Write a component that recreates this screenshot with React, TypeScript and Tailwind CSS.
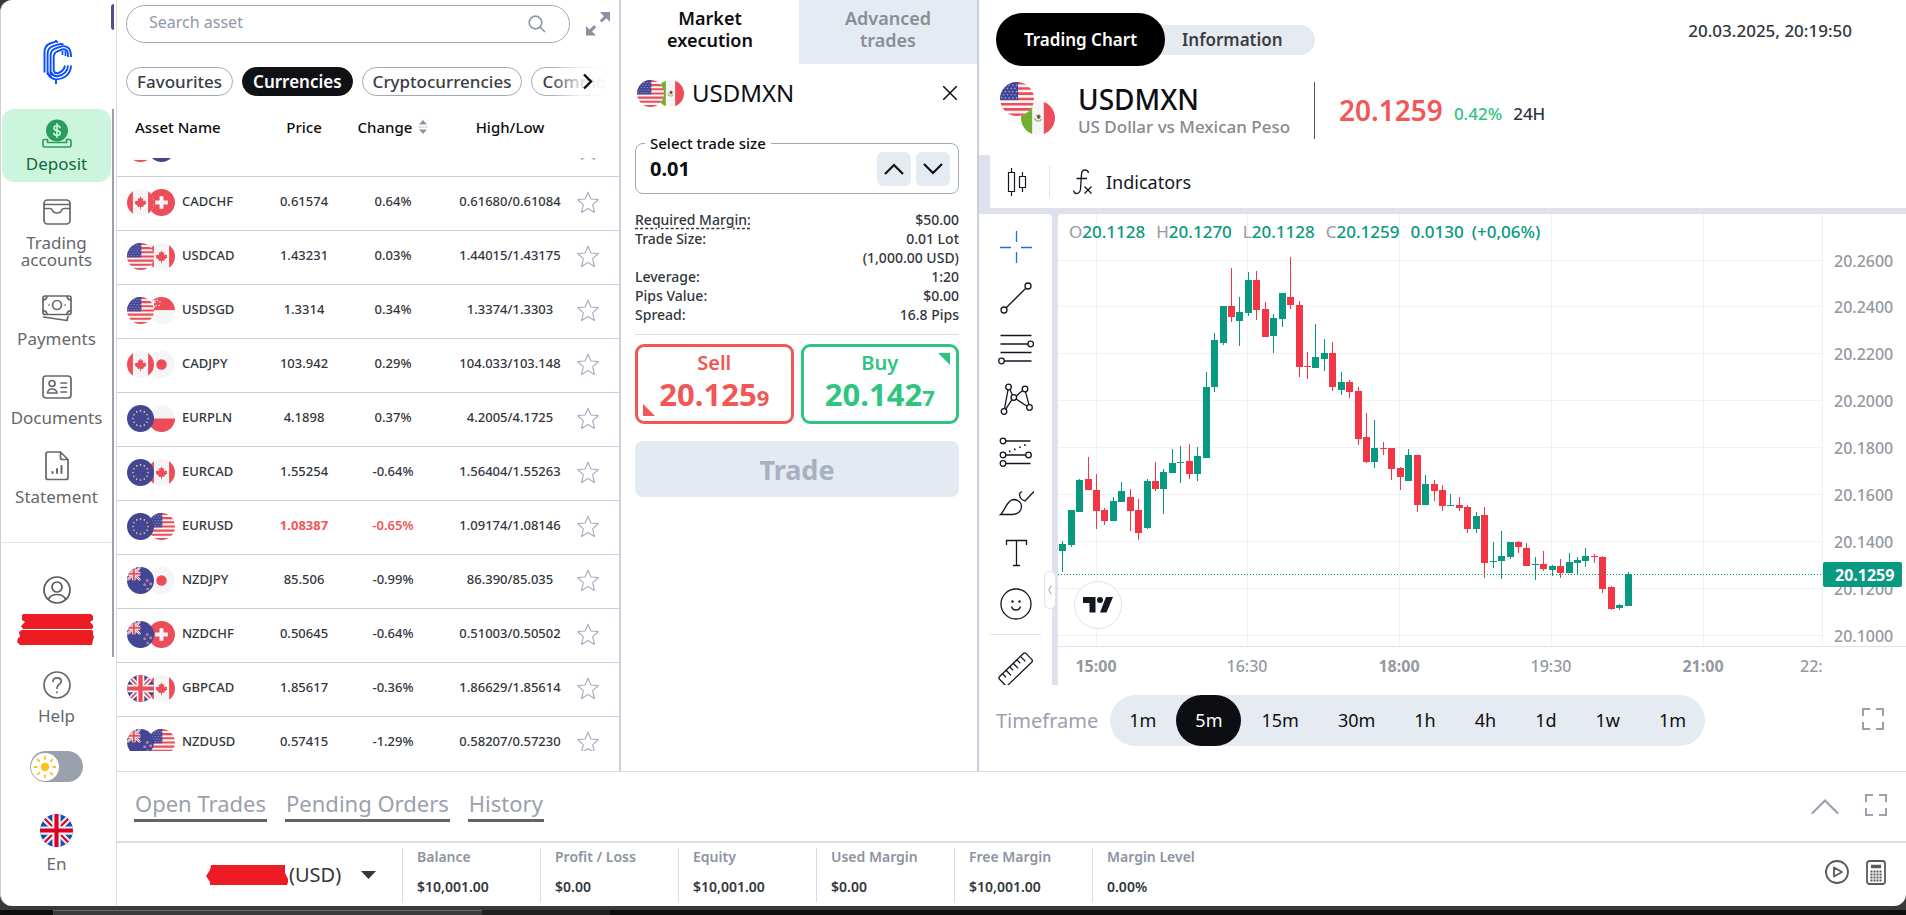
import { useState } from "react";
import type { ReactNode } from "react";
import clsx from "clsx";

type FlagCode = "us" | "ca" | "ch" | "sg" | "jp" | "eu" | "pl" | "nz" | "gb" | "mx" | "au";

type Asset = {
  name: string;
  flags: [FlagCode, FlagCode];
  price: string;
  change: string;
  range: string;
  falling?: boolean;
};

const assets: Asset[] = [
  { name: "CADCHF", flags: ["ca", "ch"], price: "0.61574", change: "0.64%", range: "0.61680/0.61084" },
  { name: "USDCAD", flags: ["us", "ca"], price: "1.43231", change: "0.03%", range: "1.44015/1.43175" },
  { name: "USDSGD", flags: ["us", "sg"], price: "1.3314", change: "0.34%", range: "1.3374/1.3303" },
  { name: "CADJPY", flags: ["ca", "jp"], price: "103.942", change: "0.29%", range: "104.033/103.148" },
  { name: "EURPLN", flags: ["eu", "pl"], price: "4.1898", change: "0.37%", range: "4.2005/4.1725" },
  { name: "EURCAD", flags: ["eu", "ca"], price: "1.55254", change: "-0.64%", range: "1.56404/1.55263" },
  { name: "EURUSD", flags: ["eu", "us"], price: "1.08387", change: "-0.65%", range: "1.09174/1.08146", falling: true },
  { name: "NZDJPY", flags: ["nz", "jp"], price: "85.506", change: "-0.99%", range: "86.390/85.035" },
  { name: "NZDCHF", flags: ["nz", "ch"], price: "0.50645", change: "-0.64%", range: "0.51003/0.50502" },
  { name: "GBPCAD", flags: ["gb", "ca"], price: "1.85617", change: "-0.36%", range: "1.86629/1.85614" },
  { name: "NZDUSD", flags: ["nz", "us"], price: "0.57415", change: "-1.29%", range: "0.58207/0.57230" },
];

// direction, wick top, body top, body bottom, wick bottom
type Candle = ["g" | "r", number, number, number, number];

const candles: Candle[] = [
  ["g", 327, 330, 337, 358], ["g", 296, 296, 331, 333], ["g", 265, 266, 298, 298], ["r", 243, 265, 276, 276],
  ["r", 260, 276, 297, 315], ["r", 294, 296, 307, 311], ["g", 283, 287, 307, 307], ["g", 268, 277, 288, 288],
  ["r", 275, 283, 297, 317], ["r", 285, 296, 319, 326], ["g", 265, 267, 314, 315], ["r", 248, 267, 275, 277],
  ["g", 255, 258, 275, 300], ["g", 235, 249, 259, 259], ["g", 232, 248, 249, 269], ["r", 230, 247, 260, 265],
  ["g", 233, 242, 260, 267], ["g", 158, 173, 244, 244], ["g", 119, 126, 173, 178], ["g", 92, 92, 129, 131],
  ["r", 54, 92, 103, 108], ["g", 83, 98, 107, 132], ["g", 58, 66, 99, 102], ["r", 57, 66, 96, 106],
  ["r", 88, 95, 123, 123], ["g", 100, 104, 122, 139], ["g", 79, 79, 105, 113], ["r", 43, 83, 91, 95],
  ["r", 87, 91, 153, 163], ["r", 138, 152, 153, 165], ["g", 110, 143, 154, 154], ["g", 125, 139, 145, 157],
  ["r", 128, 139, 173, 177], ["g", 158, 168, 176, 181], ["r", 166, 168, 178, 184], ["r", 173, 177, 225, 231],
  ["r", 199, 223, 248, 249], ["g", 206, 234, 248, 254], ["r", 228, 234, 235, 241], ["r", 234, 234, 255, 266],
  ["r", 253, 254, 263, 276], ["g", 235, 241, 267, 267], ["r", 241, 241, 291, 298], ["g", 261, 270, 291, 291],
  ["r", 266, 270, 277, 287], ["r", 271, 276, 292, 297], ["g", 280, 291, 292, 292], ["r", 283, 291, 294, 297],
  ["r", 291, 293, 315, 319], ["g", 298, 302, 315, 319], ["r", 293, 301, 349, 364], ["g", 328, 347, 348, 354],
  ["g", 317, 342, 347, 365], ["g", 328, 328, 343, 345], ["r", 327, 328, 333, 339], ["r", 329, 334, 352, 352],
  ["g", 343, 350, 351, 366], ["r", 337, 350, 355, 357], ["g", 351, 352, 356, 362], ["r", 345, 352, 359, 364],
  ["g", 339, 348, 359, 359], ["g", 343, 346, 349, 361], ["g", 334, 342, 347, 353], ["r", 340, 342, 343, 349],
  ["r", 342, 343, 375, 379], ["r", 372, 373, 395, 396], ["g", 390, 391, 394, 396], ["g", 358, 360, 392, 392],
];

const priceTicks = ["20.2600", "20.2400", "20.2200", "20.2000", "20.1800", "20.1600", "20.1400", "20.1200", "20.1000"];
const timeTicks = ["15:00", "16:30", "18:00", "19:30", "21:00"];
const timeframes = ["1m", "5m", "15m", "30m", "1h", "4h", "1d", "1w", "1m"];

const tradeInfo = [
  ["Required Margin:", "$50.00"],
  ["Trade Size:", "0.01 Lot"],
  ["", "(1,000.00 USD)"],
  ["Leverage:", "1:20"],
  ["Pips Value:", "$0.00"],
  ["Spread:", "16.8 Pips"],
];

const accountStats = [
  ["Balance", "$10,001.00"],
  ["Profit / Loss", "$0.00"],
  ["Equity", "$10,001.00"],
  ["Used Margin", "$0.00"],
  ["Free Margin", "$10,001.00"],
  ["Margin Level", "0.00%"],
];

const RED = "#ec4d58";
const BLUE = "#434695";
const PALE = "#f5f5f5";

function UnionJack() {
  return (
    <>
      <rect width="32" height="32" fill={BLUE} />
      <path d="M0 0 32 32M32 0 0 32" stroke={PALE} strokeWidth="6" />
      <path d="M0 0 32 32M32 0 0 32" stroke={RED} strokeWidth="2" />
      <path d="M16 0V32M0 16H32" stroke={PALE} strokeWidth="9" />
      <path d="M16 0V32M0 16H32" stroke={RED} strokeWidth="5" />
    </>
  );
}

function flagArt(code: FlagCode): ReactNode {
  switch (code) {
    case "us":
      return (
        <>
          <rect width="32" height="32" fill={PALE} />
          <path
            d="M0 1.2H32M0 6.1H32M0 11H32M0 16H32M0 20.9H32M0 25.8H32M0 30.8H32"
            stroke={RED}
            strokeWidth="2.5"
          />
          <rect width="17" height="17" fill={BLUE} />
          <path
            d="M1 3H17M3 6H17M1 9H17M3 12H17M1 15H17"
            stroke="#b9bbe0"
            strokeWidth="1.1"
            strokeDasharray="1.1 2.4"
          />
        </>
      );
    case "ca":
      return (
        <>
          <rect width="32" height="32" fill={PALE} />
          <path d="M0 0H7V32H0ZM25 0H32V32H25Z" fill={RED} />
          <path
            d="M16 9l1.6 2.6 1.7-.7-.6 3.5 1.9-1.2.4 1.2 2-.2-.8 2.2.9.6-4 3 .4 1.3-3-.4V24h-1v-3.1l-3 .4.4-1.3-4-3 .9-.6-.8-2.2 2 .2.4-1.2 1.9 1.2-.6-3.5 1.7.7Z"
            fill={RED}
          />
        </>
      );
    case "ch":
      return (
        <>
          <rect width="32" height="32" fill={RED} />
          <path d="M16 8.5V23.5M8.5 16H23.5" stroke={PALE} strokeWidth="4.6" />
        </>
      );
    case "sg":
      return (
        <>
          <rect width="32" height="32" fill={PALE} />
          <rect width="32" height="15.5" fill={RED} />
          <path d="M9 4a4.6 4.6 0 1 0 0 8.5 5.6 5.6 0 0 1 0-8.5Z" fill={PALE} />
          {[[11, 4], [14, 6], [13, 10], [9.5, 10], [8.5, 6.5]].map(([x, y]) => (
            <circle key={`${x}-${y}`} cx={x} cy={y} r="0.9" fill={PALE} />
          ))}
        </>
      );
    case "jp":
      return (
        <>
          <rect width="32" height="32" fill={PALE} />
          <circle cx="16" cy="16" r="6.2" fill={RED} />
        </>
      );
    case "eu":
      return (
        <>
          <rect width="32" height="32" fill={BLUE} />
          {Array.from({ length: 12 }, (_, i) => (
            <circle
              key={i}
              cx={16 + 9 * Math.cos((i * Math.PI) / 6)}
              cy={16 + 9 * Math.sin((i * Math.PI) / 6)}
              r="0.95"
              fill="#ffe15a"
            />
          ))}
        </>
      );
    case "pl":
      return (
        <>
          <rect width="32" height="32" fill={PALE} />
          <rect y="16" width="32" height="16" fill={RED} />
        </>
      );
    case "mx":
      return (
        <>
          <rect width="32" height="32" fill={PALE} />
          <rect width="10.5" height="32" fill="#73af2d" />
          <rect x="21.5" width="10.5" height="32" fill={RED} />
          <path d="M13 16a3.3 3.3 0 0 0 6.300 1" stroke="#8bb86a" strokeWidth="1.2" fill="none" />
          <path d="M14.5 14.5l2-2 2 1.5-.5 2.5-2 .5Z" fill="#7c5546" />
          <path d="M14 13.5l1-.5" stroke="#e0b04a" />
        </>
      );
    case "gb":
      return <UnionJack />;
    default:
      return (
        <>
          <rect width="32" height="32" fill={BLUE} />
          <svg width="16" height="16" viewBox="0 0 32 32">
            <UnionJack />
          </svg>
          {[[24, 16], [21, 21], [28, 20], [24.5, 26]].map(([x, y]) => (
            <g key={x}>
              <circle cx={x} cy={y} r="1.5" fill="#b9bbe0" />
              <circle cx={x} cy={y} r="1" fill={RED} />
            </g>
          ))}
        </>
      );
  }
}

function Flag({ code, className }: { code: FlagCode; className?: string }) {
  return (
    <span className={clsx("block shrink-0 overflow-hidden rounded-full", className)}>
      <svg viewBox="0 0 32 32" className="size-full" aria-hidden="true">
        {flagArt(code)}
      </svg>
    </span>
  );
}

function FlagPair({ flags }: { flags: [FlagCode, FlagCode] }) {
  return (
    <span className="flex shrink-0">
      <Flag code={flags[0]} className="relative z-10 size-[27px]" />
      <Flag code={flags[1]} className="-ml-[6px] size-[27px]" />
    </span>
  );
}

function Logo() {
  return (
    <svg width="30" height="44" viewBox="0 0 30 44" fill="none" stroke="#0a4dff" strokeWidth="1.9" aria-hidden="true">
      <path d="M1.5 32.5V12.5Q1.5 5.5 7 3.5L12 1.8Q13.5 1.4 15 2.2" />
      <path d="M4.6 35V14Q4.6 8 10 6.2L15.5 4.3Q18 3.6 20.5 4.4" />
      <path d="M7.6 37V15.5Q7.6 10.5 12 8.7L17 6.8Q22 5 25.5 8Q28 10.5 28 17" />
      <path d="M10.7 31V17.5Q10.7 13 14 11.5L19 9.5Q22.5 8.6 24.2 11Q25 12.5 25 17" />
      <path d="M19.5 11V15M22.5 10.5V16" strokeWidth="1.7" />
      <path d="M5 32.5Q6 38 12 39.2Q17 40 22.5 36.5Q28 32 28 25.5" />
      <path d="M8 32Q10 36.5 14.5 36.3Q24.5 34 25 25.5" />
      <path d="M10.7 31Q12 33.7 15 33.2Q21 31 22 25.5" />
      <path d="M13 0V2M13 39V44" />
    </svg>
  );
}

function IconBox({ children }: { children: ReactNode }) {
  return (
    <svg
      width="30"
      height="30"
      viewBox="0 0 30 30"
      fill="none"
      stroke="currentColor"
      strokeWidth="1.7"
      strokeLinecap="round"
      strokeLinejoin="round"
      aria-hidden="true"
    >
      {children}
    </svg>
  );
}

function NavItem({ label, icon, active }: { label: string; icon: ReactNode; active?: boolean }) {
  return (
    <a
      href="#"
      className={clsx(
        "flex w-[109px] flex-col items-center gap-[7px] rounded-[12px] pt-[9px] pb-[10px] text-center text-[17px] leading-[17px]",
        active ? "bg-[#ccf5de] text-[#0f6b3b]" : "text-[#66676d]",
      )}
    >
      {icon}
      <span className="max-w-[92px]">{label}</span>
    </a>
  );
}

function Sidebar() {
  return (
    <aside className="relative flex w-[116px] shrink-0 flex-col border-r border-[#dcdde1] pl-px text-[#58595e]">
      <div className="absolute top-1 right-[2px] h-[26px] w-[3px] rounded-l-full bg-[#5b4796]" />
      <div className="absolute top-[109px] right-[2px] h-[548px] w-[2px] bg-[#9ba0ae]" />
      <div className="flex h-[109px] shrink-0 justify-center pt-[40px] pr-[3px]">
        <Logo />
      </div>
      <nav className="flex flex-col gap-[6px]">
        <NavItem
          active
          label="Deposit"
          icon={
            <IconBox>
              <g stroke="#2a9d5c">
                <circle cx="15" cy="12.5" r="11" fill="#2a9d5c" stroke="none" />
                <path d="M5.5 21.5H2.5Q1 21.5 1 23V27.5Q1 29 2.5 29H27.5Q29 29 29 27.5V23Q29 21.5 27.5 21.5H24.5V24.5H5.5Z" />
                <path
                  d="M18 9.5Q17.5 7.8 15 7.8Q12 7.8 12 10Q12 12 15 12.5Q18.2 13 18.2 15.2Q18.2 17.3 15 17.3Q12.2 17.3 11.8 15.3M15 5.8V19.2"
                  stroke="#ccf5de"
                />
              </g>
            </IconBox>
          }
        />
        <NavItem
          label="Trading accounts"
          icon={
            <IconBox>
              <rect x="2" y="3" width="26" height="24" rx="3.5" />
              <path d="M2 7.5H28M2 11.5H8Q10 11.5 10.5 13.5Q11.5 16 15 16Q18.5 16 19.5 13.5Q20 11.5 22 11.5H28" />
            </IconBox>
          }
        />
        <NavItem
          label="Payments"
          icon={
            <IconBox>
              <rect x="1" y="3" width="28" height="18.5" rx="2" />
              <circle cx="15" cy="12" r="4.5" />
              <path d="M7 12h.1M23 12h.1M1.5 7Q4.5 6.5 5 3.5M28.5 7Q25.5 6.5 25 3.5M1.5 17.5Q4.5 18 5 21M28.5 17.5Q25.5 18 25 21M1.5 24L25 27.5L26 23.5" />
            </IconBox>
          }
        />
        <NavItem
          label="Documents"
          icon={
            <IconBox>
              <rect x="1" y="4" width="28" height="22" rx="3" />
              <circle cx="10" cy="11.5" r="3" />
              <path d="M5.5 21Q6 17 10 17Q14.5 17 15 21ZM19 11H24.5M19 15.5H24.5M19 20H24.5" />
            </IconBox>
          }
        />
        <NavItem
          label="Statement"
          icon={
            <IconBox>
              <path d="M18.5 1H6Q4 1 4 3V26.5Q4 28.5 6 28.5H24Q26 28.5 26 26.5V8.5L18.5 1V6.5Q18.5 8.5 20.5 8.5H26" />
              <path d="M10.5 21V22M15 18V22M19.5 15V22" strokeWidth="2" />
            </IconBox>
          }
        />
      </nav>
      <div className="mt-[27px] mr-1 h-px shrink-0 bg-[#e3e4e8]" />
      <div className="flex w-[109px] flex-col items-center pt-8">
        <IconBox>
          <circle cx="15" cy="15" r="13" />
          <circle cx="15" cy="12" r="5" />
          <path d="M6.5 24Q9 19.5 15 19.5Q21 19.5 23.5 24" />
        </IconBox>
        <svg width="80" height="33" viewBox="0 0 80 33" className="mt-2" aria-hidden="true">
          <path
            d="M6 1H74L76 3V7L73 9L76 12V15L74 16.5L76 18V22L77 24L76 27L75 32H3L0 29L1 25L3 24L2 19L6 16L4 13L8 9L5 7V2Z"
            fill="#ed1c24"
          />
          <path d="M5 16.5H74" stroke="#fff" />
        </svg>
        <div className="pt-[15px]">
          <NavItem
            label="Help"
            icon={
              <IconBox>
                <circle cx="15" cy="15" r="13" />
                <path d="M11 11.5Q11.2 7.8 15 7.8Q19.3 7.8 19.3 11.2Q19.3 13 17 14.5Q15 15.8 15 18.2M15 22.2v.2" />
              </IconBox>
            }
          />
        </div>
        <button
          type="button"
          aria-label="Light theme"
          className="mt-[17px] flex h-[31px] w-[53px] items-center rounded-full bg-[#9ba0ad] pl-px"
        >
          <span className="flex size-[28px] items-center justify-center rounded-full bg-white">
            <svg width="26" height="26" viewBox="0 0 26 26" stroke="#fcc01f" strokeWidth="1.8" aria-hidden="true">
              <circle cx="13" cy="13" r="4.2" fill="#fcc01f" stroke="none" />
              <path d="M13 2V5.5M13 20.5V24M2 13H5.5M20.5 13H24M5.2 5.2L7.7 7.7M18.3 18.3L20.8 20.8M5.2 20.8L7.7 18.3M18.3 7.7L20.8 5.2" />
            </svg>
          </span>
        </button>
        <button type="button" className="mt-8 flex flex-col items-center gap-2 text-[17px] leading-[18px] text-[#66676d]">
          <svg width="33" height="33" viewBox="0 0 32 32" className="rounded-full" aria-hidden="true">
            <rect width="32" height="32" fill="#1450b4" />
            <path d="M0 0 32 32M32 0 0 32" stroke="#f0f0f0" strokeWidth="6" />
            <path d="M0 0 32 32M32 0 0 32" stroke="#d80027" strokeWidth="2" />
            <path d="M16 0V32M0 16H32" stroke="#f0f0f0" strokeWidth="8" />
            <path d="M16 0V32M0 16H32" stroke="#d80027" strokeWidth="4" />
          </svg>
          En
        </button>
      </div>
    </aside>
  );
}

function Star() {
  return (
    <svg width="22" height="23" viewBox="0 0 22 23" fill="none" stroke="#a9b0c3" strokeWidth="1.2" strokeLinejoin="round" aria-hidden="true">
      <path d="M11 1.2L13.9 8L21.2 8.7L15.7 13.6L17.4 21.5L11 17.5L4.6 21.5L6.3 13.6L.8 8.7L8.1 8Z" />
    </svg>
  );
}

const gridCols = "grid grid-cols-[136px_102px_90px_130px_1fr] items-center";

function AssetPanel() {
  const [category, setCategory] = useState("Currencies");

  return (
    <section className="flex w-[504px] shrink-0 flex-col border-r-2 border-[#c9d0dc]">
      <div className="flex items-center gap-4 pt-[5px] pl-[9px]">
        <div className="flex h-[38px] w-[444px] items-center rounded-full border border-[#a0a9ba] pr-[23px] pl-[22px]">
          <input
            type="text"
            aria-label="Search asset"
            placeholder="Search asset"
            className="min-w-0 flex-1 pb-1 text-[16px] outline-none placeholder:text-[#9097a8]"
          />
          <svg width="18" height="18" viewBox="0 0 18 18" fill="none" stroke="#8f97ab" strokeWidth="1.7" aria-hidden="true">
            <circle cx="7.5" cy="7.5" r="6.3" />
            <path d="M12 12L17 17" />
          </svg>
        </div>
        <button type="button" aria-label="Expand list">
          <svg width="24" height="24" viewBox="0 0 24 24" fill="#8b93a2" aria-hidden="true">
            <path d="M14 0H24V10L20.3 6.3L15.8 10.6L13.8 8.6L17.9 4.3ZM0 14L3.5 17.5L8 13L10.2 15.3L6 19.6L10 23.5H0Z" />
          </svg>
        </button>
      </div>

      <div className="relative mt-6 mr-[10px] ml-[9px] overflow-hidden">
        <div className="flex gap-[9px]">
          {["Favourites", "Currencies", "Cryptocurrencies", "Commodities"].map((item) => (
            <button
              key={item}
              type="button"
              onClick={() => setCategory(item)}
              className={clsx(
                "h-[29px] shrink-0 rounded-full border px-[10px] pb-px text-[17px] leading-none",
                item === category
                  ? "border-[#101114] bg-[#101114] font-semibold text-white"
                  : "border-[#a0a9ba] font-medium text-[#3a3d45]",
              )}
            >
              {item}
            </button>
          ))}
        </div>
        <div className="absolute inset-y-0 right-0 flex w-[60px] items-center bg-linear-to-r from-transparent via-white/80 to-white pl-[33px]">
          <button type="button" aria-label="More categories">
            <svg width="12" height="17" viewBox="0 0 12 17" fill="none" stroke="#0d0e12" strokeWidth="2.4" aria-hidden="true">
              <path d="M2 1.5L9 8.5L2 15.5" />
            </svg>
          </button>
        </div>
      </div>

      <table className="flex min-h-0 flex-1 flex-col pb-5">
        <thead className="block shrink-0">
          <tr className={clsx(gridCols, "h-[62px] text-[15px] text-[#0d0e12]")}>
            <th className="pl-[18px] text-left font-medium">Asset Name</th>
            <th className="font-medium">Price</th>
            <th className="flex items-center justify-center gap-[6px] pr-[14px] font-medium">
              Change
              <svg width="10" height="14" viewBox="0 0 10 14" fill="#8b93a2" aria-hidden="true">
                <path d="M5 0L9 4.5H1ZM5 14L9 9.5H1Z" />
                <path d="M0 6.5H10M0 7.5H10" stroke="#dfe2e8" />
              </svg>
            </th>
            <th className="font-medium">High/Low</th>
            <th aria-label="Favourite" />
          </tr>
        </thead>
        <tbody className="block min-h-0 flex-1 overflow-hidden text-[13px] font-medium text-[#33363d]">
          <tr className={clsx(gridCols, "-mt-[35px] h-[54px] border-b border-[#c9d0dc]")}>
            <td className="flex pb-[3px] pl-[10px]">
              <FlagPair flags={["us", "au"]} />
            </td>
            <td />
            <td />
            <td />
            <td className="flex justify-end pr-[20px]">
              <Star />
            </td>
          </tr>
          {assets.map((asset) => (
            <tr key={asset.name} className={clsx(gridCols, "h-[54px] border-b border-[#c9d0dc] pb-[3px]")}>
              <td className="flex items-center gap-[7px] pl-[10px]">
                <FlagPair flags={asset.flags} />
                {asset.name}
              </td>
              <td className={clsx("text-center", asset.falling && "font-bold text-[#f25757]")}>{asset.price}</td>
              <td className={clsx("pr-[14px] text-center", asset.falling && "font-semibold text-[#f25757]")}>{asset.change}</td>
              <td className="text-center">{asset.range}</td>
              <td className="flex justify-end pr-[20px]">
                <button type="button" aria-label={`Favourite ${asset.name}`}>
                  <Star />
                </button>
              </td>
            </tr>
          ))}
        </tbody>
      </table>
    </section>
  );
}

function TradePanel() {
  return (
    <section className="flex w-[358px] shrink-0 flex-col border-r-2 border-[#c9d0dc]">
      <div className="grid h-16 grid-cols-2 text-[18px] leading-[22px] font-semibold">
        <button type="button" className="px-10 pb-[6px] text-[#0d0e12]">
          Market execution
        </button>
        <button type="button" className="bg-[#e5ebf2] px-10 pb-[6px] text-[#8a8d94]">
          Advanced trades
        </button>
      </div>

      <div className="flex flex-col pr-[18px] pl-[14px]">
        <div className="flex h-[58px] items-center">
          <span className="ml-[2px] flex shrink-0">
            <Flag code="us" className="relative z-10 size-[27px]" />
            <Flag code="mx" className="-ml-[7px] size-[27px]" />
          </span>
          <h2 className="ml-2 text-[24px] leading-none text-[#0d0e12]">USDMXN</h2>
          <button type="button" aria-label="Close" className="mr-[2px] ml-auto">
            <svg width="14" height="14" viewBox="0 0 14 14" stroke="#0d0e12" strokeWidth="1.5" aria-hidden="true">
              <path d="M0 0L14 14M14 0L0 14" />
            </svg>
          </button>
        </div>

        <fieldset className="mt-[12px] h-[60px] min-w-0 rounded-[8px] border border-[#a0a9ba] pr-2 pl-[9px]">
          <legend className="px-[5px] text-[15px] leading-[18px] font-medium text-[#0d0e12]">
            <label htmlFor="trade-size">Select trade size</label>
          </legend>
          <div className="flex items-center gap-[5px] pl-[5px]">
            <input
              id="trade-size"
              type="text"
              defaultValue="0.01"
              className="min-w-0 flex-1 text-[20px] leading-[34px] font-bold text-[#0d0e12] outline-none"
            />
            <button type="button" aria-label="Increase" className="flex size-[34px] shrink-0 items-center justify-center rounded-[6px] bg-[#e5ebf2]">
              <svg width="20" height="12" viewBox="0 0 20 12" fill="none" stroke="#0d0e12" strokeWidth="2.2" aria-hidden="true">
                <path d="M1 11L10 2L19 11" />
              </svg>
            </button>
            <button type="button" aria-label="Decrease" className="flex size-[34px] shrink-0 items-center justify-center rounded-[6px] bg-[#e5ebf2]">
              <svg width="20" height="12" viewBox="0 0 20 12" fill="none" stroke="#0d0e12" strokeWidth="2.2" aria-hidden="true">
                <path d="M1 1L10 10L19 1" />
              </svg>
            </button>
          </div>
        </fieldset>

        <dl className="mt-4 border-b border-[#dcdde1] pb-[10px] text-[14px] leading-[19px] font-medium text-[#33363d]">
          {tradeInfo.map(([label, value]) => (
            <div key={value} className="flex justify-between">
              <dt className={clsx(label === "Required Margin:" && "underline decoration-dashed underline-offset-[3px]")}>{label}</dt>
              <dd>{value}</dd>
            </div>
          ))}
        </dl>

        <div className="mt-[9px] grid grid-cols-2 gap-[7px]">
          <button
            type="button"
            className="relative flex h-20 flex-col items-center justify-center rounded-[9px] border-[3px] border-[#f25757] pb-[2px] font-bold text-[#f25757]"
          >
            <span className="text-[20px] leading-[24px] font-semibold">Sell</span>
            <span className="text-[31px] leading-[38px]">
              20.125<span className="text-[22px]">9</span>
            </span>
            <svg width="12" height="12" className="absolute bottom-[5px] left-[5px]" aria-hidden="true">
              <path d="M0 0L12 12H0Z" fill="#f25757" />
            </svg>
          </button>
          <button
            type="button"
            className="relative flex h-20 flex-col items-center justify-center rounded-[9px] border-[3px] border-[#2dc57f] pb-[2px] font-bold text-[#2dc57f]"
          >
            <span className="text-[20px] leading-[24px] font-semibold">Buy</span>
            <span className="text-[31px] leading-[38px]">
              20.142<span className="text-[22px]">7</span>
            </span>
            <svg width="12" height="12" className="absolute top-[6px] right-[6px]" aria-hidden="true">
              <path d="M0 0H12V12Z" fill="#2dc57f" />
            </svg>
          </button>
        </div>

        <button type="button" className="mt-[17px] h-14 rounded-[8px] bg-[#e3eaf1] text-[27px] leading-none font-bold text-[#a9b0bf]">
          Trade
        </button>
      </div>
    </section>
  );
}

function ToolIcon({ label, color, children }: { label: string; color?: string; children: ReactNode }) {
  return (
    <button type="button" aria-label={label} className="flex h-[51px] w-full shrink-0 items-center justify-center">
      <svg
        width="36"
        height="36"
        viewBox="0 0 36 36"
        fill="none"
        stroke={color ?? "#131722"}
        strokeWidth="1.3"
        aria-hidden="true"
      >
        {children}
      </svg>
    </button>
  );
}

function DrawingToolbar() {
  return (
    <div className="relative flex w-[73px] shrink-0 flex-col rounded-tr-[4px] bg-white">
      <div className="flex min-h-0 flex-1 flex-col overflow-hidden pt-[7px]">
        <ToolIcon label="Cross" color="#2962ff">
          <path d="M18.5 2V13M18.5 23V34M2 18.5H13M23 18.5H34" />
        </ToolIcon>
        <ToolIcon label="Trend line">
          <circle cx="6" cy="30" r="3" />
          <circle cx="30" cy="6" r="3" />
          <path d="M8.2 27.8L27.8 8.2" />
        </ToolIcon>
        <ToolIcon label="Fib retracement">
          <path d="M2.5 4.5H33.5M2.5 13H30M2.5 21.5H33.5M6 30H33.5" />
          <circle cx="32.7" cy="13" r="2.8" />
          <circle cx="3.5" cy="30" r="2.8" />
        </ToolIcon>
        <ToolIcon label="Pattern">
          <circle cx="10.5" cy="5" r="2.8" />
          <circle cx="27" cy="7" r="2.8" />
          <circle cx="15.8" cy="15.5" r="2.8" />
          <circle cx="6" cy="29.5" r="2.8" />
          <circle cx="31.5" cy="25.5" r="2.8" />
          <path d="M10 7.8L6.5 26.7M11.8 7.5L14.5 13M18.2 14L24.6 8.5M27.5 9.8L31 22.7M18.2 17L29 24.2M14 17.7L7.7 27.2" />
        </ToolIcon>
        <ToolIcon label="Forecast">
          <circle cx="5" cy="8" r="2.8" />
          <circle cx="5" cy="22" r="2.8" />
          <circle cx="30.5" cy="22" r="2.8" />
          <circle cx="5" cy="30.5" r="2.8" />
          <path d="M7.8 8H32.5M7.8 22H27.7M7.8 30.5H32.5" />
          <path d="M11 18.7L31 10.5" strokeDasharray="1.5 4" strokeWidth="1.8" />
        </ToolIcon>
        <ToolIcon label="Brush">
          <path d="M2.5 30.5C7 27 8.5 16 15.5 15.5Q23.5 16 23.5 23Q22.5 30 14.5 30.5Z" />
          <path d="M24 7.5Q21.5 8.5 21.5 11Q22 15.5 27 17L36 7.5" />
        </ToolIcon>
        <ToolIcon label="Text">
          <path d="M8.5 10V5.5H28.5V10M18.5 5.5V30.5M15 30.5H22" />
        </ToolIcon>
        <ToolIcon label="Icon">
          <circle cx="18" cy="18" r="15" />
          <circle cx="14.5" cy="15.5" r="1.2" fill="#131722" stroke="none" />
          <circle cx="21.5" cy="15.5" r="1.2" fill="#131722" stroke="none" />
          <path d="M13.5 20.5Q14.5 24 18 24Q21.5 24 22.5 20.5" />
        </ToolIcon>
        <div className="mx-[11px] mt-[5px] mb-2 h-px shrink-0 bg-[#dfe2ec]" />
        <ToolIcon label="Measure">
          <g transform="rotate(-44 18 18)">
            <rect x="-1" y="12" width="37" height="12" rx="2" />
            <path d="M5 12V17M10 12V19M15 12V17M20 12V19M25 12V17M30 12V19" />
          </g>
        </ToolIcon>
      </div>
      <button
        type="button"
        aria-label="Hide toolbar"
        className="absolute top-[357px] -right-1 flex h-[38px] w-3 items-center justify-center rounded-[6px] border border-[#dfe2ec] bg-white"
      >
        <svg width="4" height="10" viewBox="0 0 4 10" fill="none" stroke="#9598a1" aria-hidden="true">
          <path d="M3.5 .5L.8 5L3.5 9.5" />
        </svg>
      </button>
    </div>
  );
}

function Ohlc({ label, value }: { label: string; value: string }) {
  return (
    <span className="text-[#089981]">
      <span className="font-normal text-[#9598a1]">{label}</span>
      {value}
    </span>
  );
}

function ChartCanvas() {
  return (
    <div className="relative flex min-w-0 flex-1 overflow-hidden rounded-tl-[4px] bg-white">
      <svg className="h-full min-w-0 flex-1 text-[16px]" aria-label="USDMXN candles">
        <g stroke="#f0f1f2">
          {priceTicks.map((tick, i) => (
            <line key={tick} x1="0" x2="100%" y1={46.5 + Math.floor(i * 46.9)} y2={46.5 + Math.floor(i * 46.9)} />
          ))}
          {timeTicks.map((tick, i) => (
            <line key={tick} x1={38.5 + Math.floor(i * 151.8)} x2={38.5 + Math.floor(i * 151.8)} y1="0" y2="432" />
          ))}
        </g>
        <line x1="0" x2="100%" y1="432.5" y2="432.5" stroke="#dfe0ea" />
        <g shapeRendering="crispEdges">
          {candles.map(([direction, high, top, bottom, low], i) => {
            const x = Math.floor(4.7 + i * 8.44);
            return (
              <g key={i} fill={direction === "g" ? "#089981" : "#f23645"}>
                <rect x={x} y={high} width="1" height={low - high} />
                <rect x={x - 3} y={top} width="7" height={bottom - top} />
              </g>
            );
          })}
        </g>
        <line x1="0" x2="100%" y1="360.5" y2="360.5" stroke="#089981" strokeDasharray="1 2" />
        {timeTicks.map((tick, i) => (
          <text
            key={tick}
            x={38 + Math.floor(i * 151.8)}
            y="458"
            textAnchor="middle"
            fill="#9598a1"
            className={i % 2 === 0 ? "font-bold" : "font-medium"}
          >
            {tick}
          </text>
        ))}
        <text x="742" y="458" fill="#9598a1" className="font-medium">
          22:
        </text>
      </svg>
      <svg className="h-full w-[84px] shrink-0 text-[16px] font-medium" aria-label="Price scale">
        <line x1="0.5" x2="0.5" y1="0" y2="432" stroke="#f0f1f2" />
        <line x1="1" x2="100%" y1="432.5" y2="432.5" stroke="#dfe0ea" />
        {priceTicks.map((tick, i) => (
          <text key={tick} x="12" y={53 + Math.floor(i * 46.9)} fill="#9598a1">
            {tick}
          </text>
        ))}
        <rect x="1" y="348" width="79" height="25" rx="2" fill="#089981" />
        <text x="13" y="367" fill="#fff" className="font-bold">
          20.1259
        </text>
      </svg>
      <div className="absolute top-[6px] left-[11px] flex gap-[11px] text-[17px] leading-[24px] font-medium">
        <Ohlc label="O" value="20.1128" />
        <Ohlc label="H" value="20.1270" />
        <Ohlc label="L" value="20.1128" />
        <Ohlc label="C" value="20.1259" />
        <span className="flex gap-2 text-[#089981]">
          <span>0.0130</span>
          <span>(+0,06%)</span>
        </span>
      </div>
      <a
        href="#"
        aria-label="TradingView"
        className="absolute top-[367px] left-4 flex size-12 items-center justify-center rounded-full border border-[#dfe2ec] bg-white"
      >
        <svg width="30" height="16" viewBox="0 0 30 16" fill="#131722" aria-hidden="true">
          <path d="M0 0H12.5V15.5H6.5V6H0Z" />
          <circle cx="17" cy="3" r="3" />
          <path d="M23 0H30L23.5 15.5H17Z" />
        </svg>
      </a>
    </div>
  );
}

function FullscreenIcon() {
  return (
    <svg width="22" height="22" viewBox="0 0 22 22" fill="none" stroke="#9ba0ae" strokeWidth="2" aria-hidden="true">
      <path d="M1 8V1H8M14 1H21V8M21 14V21H14M8 21H1V14" />
    </svg>
  );
}

function ChartPanel() {
  const [frame, setFrame] = useState(1);

  return (
    <section className="flex min-w-0 flex-1 flex-col">
      <header className="h-[155px] shrink-0 pl-[17px]">
        <div className="flex items-center pt-[13px]">
          <button
            type="button"
            className="relative z-10 h-[53px] w-[169px] rounded-full bg-black text-[17px] leading-none font-semibold text-white"
          >
            Trading Chart
          </button>
          <button
            type="button"
            className="-ml-8 h-[30px] rounded-r-full bg-[#e6ebf2] pr-8 pl-[49px] text-[17px] leading-none font-semibold text-[#3a3d45]"
          >
            Information
          </button>
          <time className="mr-[54px] ml-auto pb-[18px] text-[17px] leading-none font-medium text-[#33363d]">20.03.2025, 20:19:50</time>
        </div>
        <div className="mt-4 flex h-[57px]">
          <div className="relative h-[53px] w-[55px] shrink-0 pl-1">
            <Flag code="us" className="relative z-10 size-[34px]" />
            <Flag code="mx" className="absolute top-[19px] left-[25px] size-[34px]" />
          </div>
          <div className="ml-[27px]">
            <h1 className="text-[28px] leading-[35px] font-medium text-[#0d0e12]">USDMXN</h1>
            <p className="text-[17px] leading-[20px] font-medium text-[#88898e]">US Dollar vs Mexican Peso</p>
          </div>
          <div className="ml-6 w-px bg-[#58595e]" />
          <div className="flex items-center gap-[11px] pb-[2px] pl-6 text-[17px] font-medium">
            <span className="text-[28px] leading-none font-semibold text-[#f25757]">20.1259</span>
            <span className="pt-2 text-[#2dc57f]">0.42%</span>
            <span className="pt-2 text-[#33363d]">24H</span>
          </div>
        </div>
      </header>

      <div className="flex h-[53px] shrink-0 items-center border-l-[11px] border-[#dfe2ec]">
        <button type="button" aria-label="Candles" className="pl-[17px]">
          <svg width="20" height="28" viewBox="0 0 20 28" fill="none" stroke="#131722" strokeWidth="1.2" aria-hidden="true">
            <path d="M1.5 4.5H7.5V23.5H1.5ZM4.5 0V4.5M4.5 23.5V28M12.5 8.5H18.5V19.5H12.5ZM15.5 4V8.5M15.5 19.5V24" />
          </svg>
        </button>
        <div className="ml-[22px] h-[31px] w-px bg-[#dfe2ec]" />
        <button type="button" className="ml-[23px] flex items-center gap-[13px] text-[18px] leading-none text-[#131722]">
          <svg width="20" height="26" viewBox="0 0 20 26" fill="none" stroke="#131722" strokeWidth="1.3" aria-hidden="true">
            <path d="M15.5 4Q15 1 12 1Q8.8 1 8.5 5L7.5 20Q7 24.5 3.5 24.5Q.8 24.5.6 21.5M3.5 9.5H14M11.5 17.5L18.5 24.5M18.5 17.5L11.5 24.5" />
          </svg>
          Indicators
        </button>
      </div>

      <div className="flex min-h-0 flex-1 gap-[6px] border-t-[6px] border-[#dfe2ec] bg-[#dfe2ec]">
        <DrawingToolbar />
        <ChartCanvas />
      </div>

      <div className="flex h-[86px] shrink-0 items-center pr-[22px] pb-[15px] pl-[17px]">
        <span className="text-[20px] leading-none text-[#9ba0ae]">Timeframe</span>
        <div className="ml-3 flex h-[51px] gap-px rounded-full bg-[#e6ebf2]">
          {timeframes.map((item, i) => (
            <button
              key={i}
              type="button"
              onClick={() => setFrame(i)}
              className={clsx("rounded-full px-[19px] text-[18px]", i === frame ? "bg-[#0d0e12] text-white" : "text-[#0d0e12]")}
            >
              {item}
            </button>
          ))}
        </div>
        <button type="button" aria-label="Fullscreen chart" className="ml-auto pb-1">
          <FullscreenIcon />
        </button>
      </div>
    </section>
  );
}

function OrdersBar() {
  return (
    <div className="flex h-[70px] shrink-0 items-center border-t border-[#dcdde1] pr-[19px] pl-[17px]">
      <div className="flex gap-[18px] pb-[5px] text-[22px] leading-[32px] text-[#9ba0ae]">
        {["Open Trades", "Pending Orders", "History"].map((item) => (
          <button key={item} type="button" className="border-b-[3px] border-[#63646a] px-px">
            {item}
          </button>
        ))}
      </div>
      <button type="button" aria-label="Open orders" className="mr-[26px] ml-auto">
        <svg width="28" height="15" viewBox="0 0 28 15" fill="none" stroke="#9ba0ae" strokeWidth="2.2" strokeLinecap="round" aria-hidden="true">
          <path d="M1.5 14L14 1.5L26.5 14" />
        </svg>
      </button>
      <button type="button" aria-label="Fullscreen orders" className="pb-1">
        <FullscreenIcon />
      </button>
    </div>
  );
}

function AccountBar() {
  return (
    <footer className="flex h-[65px] shrink-0 items-center border-t-2 border-[#dcdde1] pr-5">
      <button type="button" className="flex w-[285px] items-center pl-[89px] text-[20px] leading-none text-[#33363d]">
        <svg width="83" height="20" viewBox="0 0 83 20" aria-hidden="true">
          <path d="M5 0H79V8L82 14V17L81 20H4V17L0 11L4 5Z" fill="#ed1c24" />
        </svg>
        (USD)
        <svg width="15" height="8" viewBox="0 0 15 8" className="ml-5" aria-hidden="true">
          <path d="M0 0H15L7.5 8Z" fill="#33363d" />
        </svg>
      </button>
      <dl className="flex text-[14px] font-semibold">
        {accountStats.map(([label, value]) => (
          <div key={label} className="flex h-[54px] w-[138px] flex-col justify-between border-l border-[#dcdde1] pl-[14px] leading-[18px]">
            <dt className="text-[#8b93a2]">{label}</dt>
            <dd className="pb-[6px] text-[#33363d]">{value}</dd>
          </div>
        ))}
      </dl>
      <button type="button" aria-label="Tutorial" className="mr-[17px] ml-auto pb-[5px]">
        <svg width="24" height="24" viewBox="0 0 24 24" fill="none" stroke="#58595e" strokeWidth="1.8" strokeLinejoin="round" aria-hidden="true">
          <circle cx="12" cy="12" r="11" />
          <path d="M9 7.5V16.5L17 12Z" />
        </svg>
      </button>
      <button type="button" aria-label="Calculator" className="pb-[5px]">
        <svg width="20" height="25" viewBox="0 0 20 25" fill="none" stroke="#58595e" strokeWidth="1.8" aria-hidden="true">
          <rect x="1" y="1" width="18" height="23" rx="2.5" />
          <path d="M5 6.5H15" strokeWidth="3.5" />
          <path d="M4.5 11.5H16M4.5 14.5H16M4.5 17.5H16M4.5 20.5H16" strokeDasharray="2 1" />
        </svg>
      </button>
    </footer>
  );
}

export default function App() {
  return (
    <div className="flex h-screen min-h-[915px] flex-col bg-[#3a3a3a] font-['Noto_Sans',sans-serif]">
      <div className="flex min-h-0 flex-1 overflow-hidden rounded-[12px] rounded-tr-none border-l border-[#cfcfcf] bg-white">
        <Sidebar />
        <div className="flex min-w-0 flex-1 flex-col">
          <main className="flex min-h-0 flex-1">
            <AssetPanel />
            <TradePanel />
            <ChartPanel />
          </main>
          <OrdersBar />
          <AccountBar />
        </div>
      </div>
      <div className="mt-1 flex h-[5px] shrink-0 bg-[#0e0e0e]">
        <div className="ml-[53px] w-[429px] border-t border-[#6a6a6a] bg-[#3a3a3a]" />
        <div className="w-[128px] bg-[#202020]" />
      </div>
    </div>
  );
}
